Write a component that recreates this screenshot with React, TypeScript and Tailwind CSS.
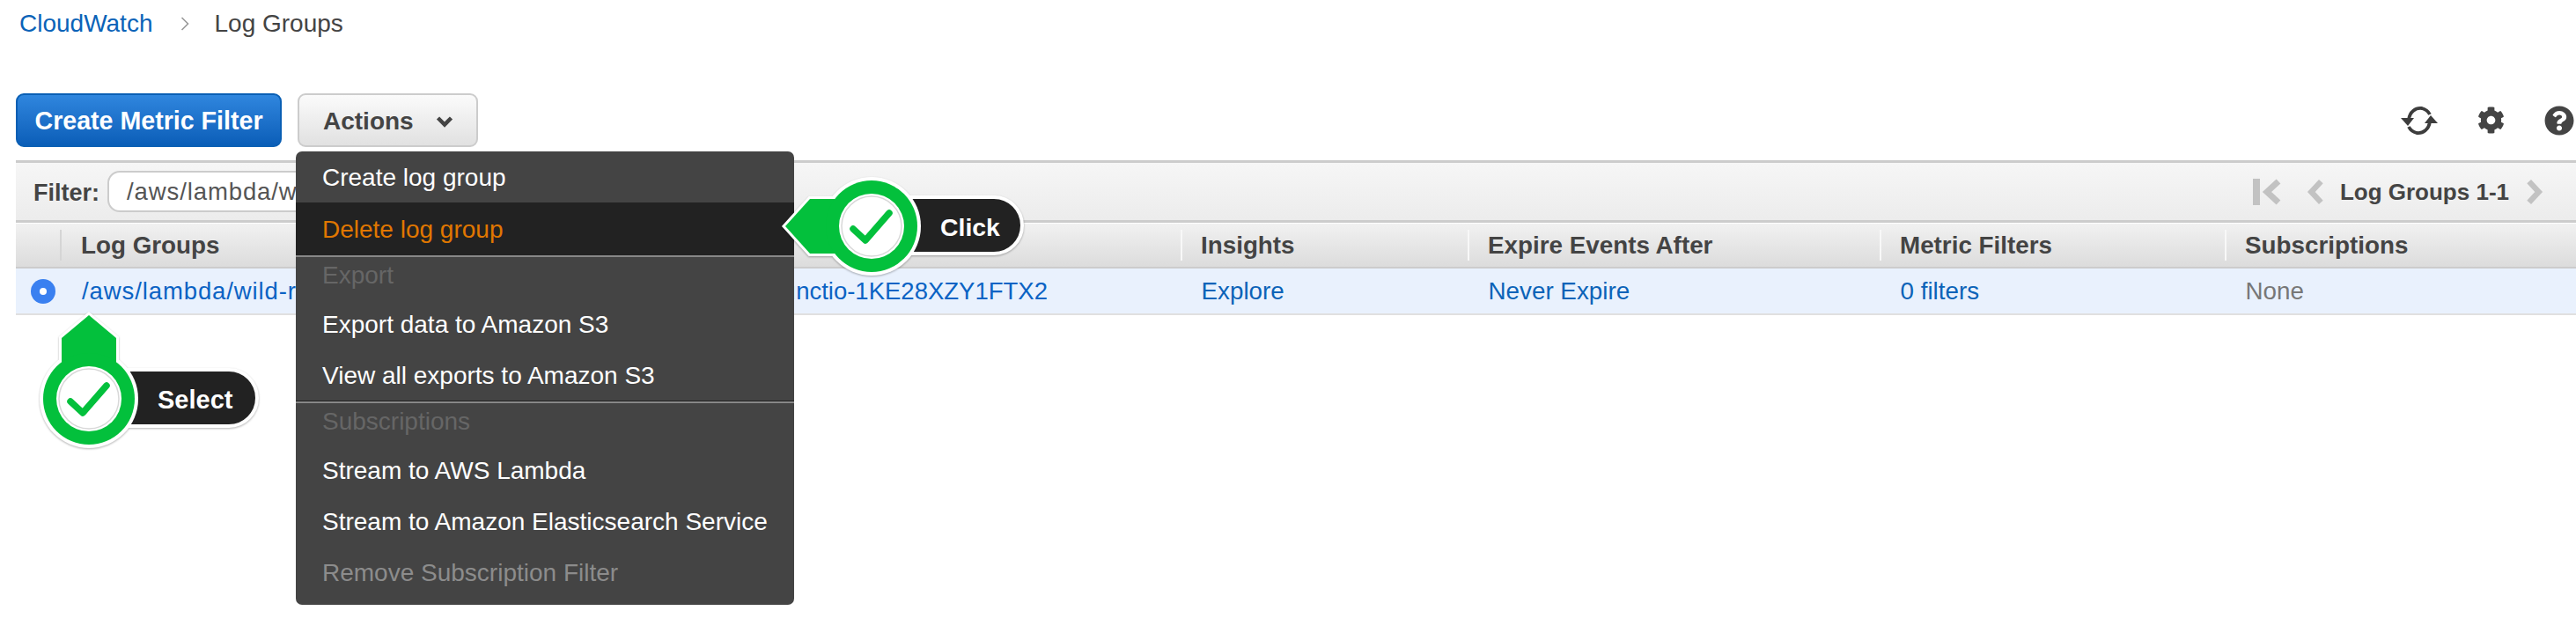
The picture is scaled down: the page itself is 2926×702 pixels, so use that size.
import { FaCog, FaQuestionCircle } from 'react-icons/fa';

const font = 'font-["Liberation_Sans",Arial,sans-serif]';

const columns = [
  { title: 'Insights', value: 'Explore', link: true, width: 'w-[326px]' },
  { title: 'Expire Events After', value: 'Never Expire', link: true, width: 'w-[468px]' },
  { title: 'Metric Filters', value: '0 filters', link: true, width: 'w-[392px]' },
  { title: 'Subscriptions', value: 'None', link: false, width: 'flex-1' },
];

function MenuItem({ label, tone = 'text-white' }: { label: string; tone?: string }) {
  return <div className={`flex h-[58px] items-center pl-[30px] pt-[2px] ${tone}`}>{label}</div>;
}

function MenuHeading({ label }: { label: string }) {
  return <div className="flex h-[47px] items-center pb-[6px] pl-[30px] text-[#666]">{label}</div>;
}

function Chevron({ points, className = '' }: { points: string; className?: string }) {
  return (
    <svg viewBox="0 0 24 32" className={`h-[30px] w-[22px] ${className}`}>
      <polyline points={points} fill="none" stroke="#c2c2c2" strokeWidth="7" />
    </svg>
  );
}

function Check() {
  return (
    <>
      <circle cx="0" cy="0" r="37" fill="#fff" />
      <circle cx="0" cy="0" r="34" fill="#fff" stroke="#d8d8d8" strokeWidth="1.5" />
      <polyline
        points="-21,3 -7,16 20,-15"
        fill="none"
        stroke="#03c03c"
        strokeWidth="7.5"
        strokeLinecap="round"
        strokeLinejoin="round"
      />
    </>
  );
}

function ClickCallout() {
  const arrow = '892,257 920,226 1000,226 1000,288 920,288';
  return (
    <div className="absolute left-[880px] top-[190px] h-[130px] w-[290px]">
      <svg
        width="290"
        height="130"
        viewBox="880 190 290 130"
        className="absolute inset-0 drop-shadow-[0_1px_1px_rgba(0,0,0,0.3)]"
      >
        <rect x="960" y="224" width="201" height="64" rx="32" fill="#222" stroke="#fff" strokeWidth="4" />
        <polygon points={arrow} fill="#fff" stroke="#fff" strokeWidth="6" />
        <g transform="translate(990 257)">
          <circle r="56" fill="#fff" />
        </g>
        <polygon points={arrow} fill="#03c03c" />
        <g transform="translate(990 257)">
          <circle r="52" fill="#03c03c" />
          <Check />
        </g>
      </svg>
      <span className="absolute left-[188px] top-[51px] text-[28.4px] font-bold leading-[34px] text-white">Click</span>
    </div>
  );
}

function SelectCallout() {
  const arrow = '101,358 132,384 132,440 70,440 70,384';
  return (
    <div className="absolute left-[40px] top-[350px] h-[165px] w-[260px]">
      <svg
        width="260"
        height="165"
        viewBox="40 350 260 165"
        className="absolute inset-0 drop-shadow-[0_1px_1px_rgba(0,0,0,0.3)]"
      >
        <rect x="110" y="420" width="182" height="64" rx="32" fill="#222" stroke="#fff" strokeWidth="4" />
        <polygon points={arrow} fill="#fff" stroke="#fff" strokeWidth="6" />
        <g transform="translate(101 453)">
          <circle r="56" fill="#fff" />
        </g>
        <polygon points={arrow} fill="#03c03c" />
        <g transform="translate(101 453)">
          <circle r="52" fill="#03c03c" />
          <Check />
        </g>
      </svg>
      <span className="absolute left-[139px] top-[87px] text-[29px] font-bold leading-[34px] text-white">Select</span>
    </div>
  );
}

function ActionsMenu() {
  return (
    <div className="absolute left-[336px] top-[172px] h-[515px] w-[566px] overflow-hidden rounded-[7px] bg-[#444] text-[28px] leading-[34px]">
      <MenuItem label="Create log group" />
      <div className="flex h-[60px] items-center bg-[#222] pl-[30px] pt-[2px] text-[#e07700]">Delete log group</div>
      <div className="h-[2px] bg-[#888]" />
      <MenuHeading label="Export" />
      <MenuItem label="Export data to Amazon S3" />
      <MenuItem label="View all exports to Amazon S3" />
      <div className="h-[1px] bg-[#222]" />
      <div className="h-[2px] bg-[#888]" />
      <MenuHeading label="Subscriptions" />
      <MenuItem label="Stream to AWS Lambda" />
      <MenuItem label="Stream to Amazon Elasticsearch Service" />
      <MenuItem label="Remove Subscription Filter" tone="text-[#8c8c8c]" />
    </div>
  );
}

export default function App() {
  return (
    <div className={`relative h-[702px] w-[2926px] overflow-hidden bg-white ${font} text-[#444]`}>
      <nav className="flex h-[54px] items-center pl-[22px] text-[28px] leading-[34px]">
        <span className="text-[#0b63b8]">CloudWatch</span>
        <svg viewBox="0 0 10 16" className="ml-[32px] h-[16px] w-[10px]">
          <polyline points="1.5,1 8.5,8 1.5,15" fill="none" stroke="#999" strokeWidth="1.6" />
        </svg>
        <span className="ml-[28px]">Log Groups</span>
      </nav>

      <div className="mt-[52px] flex h-[61px] items-center pl-[18px] pr-[2px]">
        <button className="h-full w-[302px] rounded-[9px] border-2 border-[#0a5fb4] bg-gradient-to-b from-[#2f86de] to-[#0a5eb8] pt-[2px] text-[28.6px] font-bold text-white">
          Create Metric Filter
        </button>
        <button className="ml-[18px] flex h-full w-[205px] items-center rounded-[9px] border-2 border-[#ccc] bg-gradient-to-b from-[#fbfbfb] to-[#e1e1e1] pl-[27px] pt-[2px] text-[28px] font-bold">
          Actions
          <svg viewBox="0 0 20 14" className="ml-[25px] h-[14px] w-[20px]">
            <polyline points="2.5,3 10,10.5 17.5,3" fill="none" stroke="#444" strokeWidth="4.5" />
          </svg>
        </button>
        <div className="ml-auto flex items-center">
          <svg viewBox="0 0 42 36" className="mr-[45px] h-[36px] w-[42px]" fill="none">
            <path d="M9 17 C10 8 17 3 24 4 C28 5 31 7 33 11" stroke="#3d3d3d" strokeWidth="3.8" />
            <path d="M33 19 C32 28 25 33 18 32 C14 31 11 29 9 25" stroke="#3d3d3d" strokeWidth="3.8" />
            <polygon points="0,15 15,15 8,24" fill="#3d3d3d" />
            <polygon points="27,21 42,21 34,12" fill="#3d3d3d" />
          </svg>
          <FaCog className="mr-[45px] text-[#444]" size={31} />
          <FaQuestionCircle className="text-[#444]" size={34} />
        </div>
      </div>

      <div className="ml-[18px] mt-[15px] text-[27.8px] leading-[34px]">
        <div className="flex h-[71px] items-center border-y-[3px] border-[#ccc] bg-gradient-to-b from-[#f6f6f6] to-[#ececec] pl-[20px]">
          <span className="pt-[2px] text-[27px] font-bold">Filter:</span>
          <div className="ml-[9px] flex h-[47px] w-[500px] items-center rounded-[14px] border-2 border-[#ccc] bg-white pl-[20px] text-[27.5px] tracking-[0.9px] text-[#555]">
            /aws/lambda/wild-rydes
          </div>
          <div className="ml-auto flex items-center text-[26px] font-bold">
            <svg viewBox="0 0 32 30" className="mr-[27px] h-[30px] w-[32px]">
              <rect x="0" y="0" width="8" height="30" fill="#c2c2c2" />
              <polyline points="29,3 16,15 29,27" fill="none" stroke="#c2c2c2" strokeWidth="7" />
            </svg>
            <Chevron points="20,3 8,16 20,29" className="mr-[18px]" />
            <span>Log Groups 1-1</span>
            <Chevron points="4,3 16,16 4,29" className="ml-[19px] mr-[35px]" />
          </div>
        </div>

        <div className="flex h-[52px] items-center border-b-[2px] border-t border-b-[#ccc] border-t-white bg-gradient-to-b from-[#f1f1f1] to-[#dcdcdc] font-bold">
          <div className="w-[50px]" />
          <div className="flex w-[1273px] items-center">
            <span className="h-[35px] w-[2px] bg-[#d5d5d5]" />
            <span className="ml-[22px]">Log Groups</span>
          </div>
          {columns.map((col) => (
            <div key={col.title} className={`flex items-center ${col.width}`}>
              <span className="h-[35px] w-[2px] bg-[#f8f8f8]" />
              <span className="ml-[21px]">{col.title}</span>
            </div>
          ))}
        </div>

        <div className="flex h-[53px] items-center border-b-[2px] border-[#e0e0e0] bg-[#e9f1fd]">
          <div className="w-[50px] pl-[17px]">
            <div className="flex h-[28px] w-[28px] items-center justify-center rounded-full bg-[#3a80f0]">
              <div className="h-[8px] w-[8px] rounded-full bg-white" />
            </div>
          </div>
          <div className="w-[1273px] whitespace-nowrap pl-[25px] text-[27.5px] text-[#0b63c4]">
            <span className="tracking-[0.9px]">/aws/lambda/wild-r</span>
            <span className="tracking-[0.5px]">ydes-stack-backend-prod-RequestUnicornFu</span>
            nctio-1KE28XZY1FTX2
          </div>
          {columns.map((col) => (
            <div
              key={col.title}
              className={`pl-[23.5px] ${col.width} ${col.link ? 'text-[#0b63b8]' : 'text-[#777]'}`}
            >
              {col.value}
            </div>
          ))}
        </div>
      </div>

      <ActionsMenu />
      <ClickCallout />
      <SelectCallout />
    </div>
  );
}
